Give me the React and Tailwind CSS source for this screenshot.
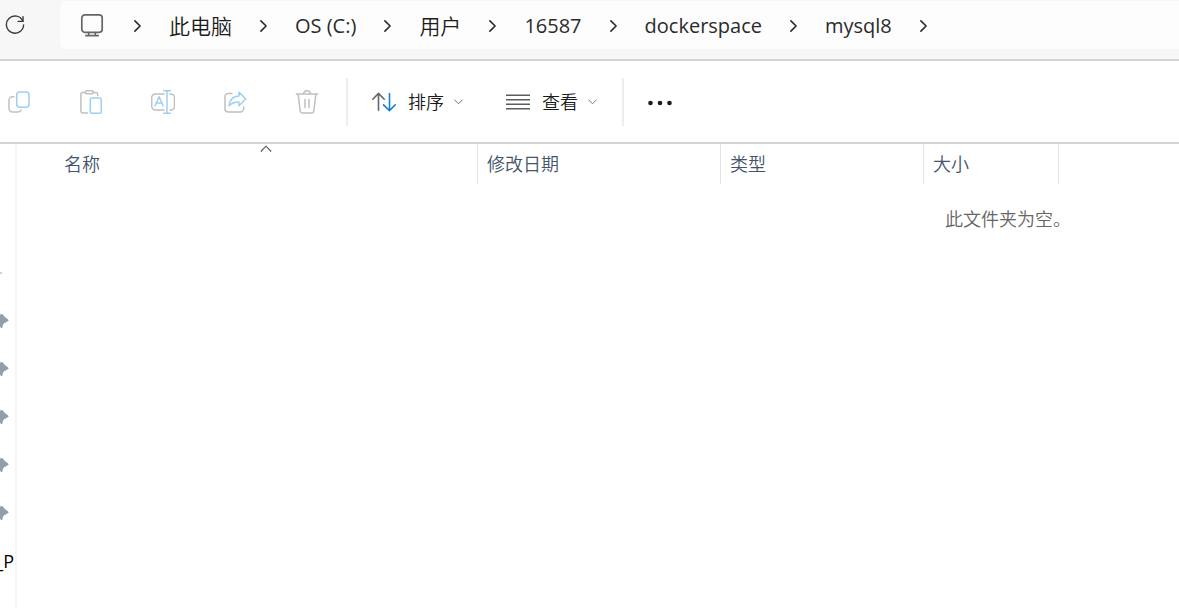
import React from 'react';

const crumbs = [
  { name: '此电脑', cjk: true },
  { name: 'OS (C:)' },
  { name: '用户', cjk: true },
  { name: '16587' },
  { name: 'dockerspace' },
  { name: 'mysql8' },
];

function CrumbChevron() {
  return (
    <svg className="h-3 w-[7px] shrink-0" viewBox="0 0 7 12" fill="none" stroke="#2b2b2b" strokeWidth="1.6" strokeLinecap="round" strokeLinejoin="round" aria-hidden="true">
      <path d="M0.9 0.9 6.1 6 0.9 11.1" />
    </svg>
  );
}

function MenuChevron() {
  return (
    <svg className="h-2 w-[9px] shrink-0" viewBox="0 0 9 8" fill="none" stroke="#777" strokeWidth="1" strokeLinecap="round" aria-hidden="true">
      <path d="M0.8 2 4.5 5.8 8.2 2" />
    </svg>
  );
}

function RefreshIcon() {
  return (
    <svg className="size-5" viewBox="0 0 20 20" fill="none" stroke="#3a3a3a" strokeWidth="1.4" strokeLinecap="round" strokeLinejoin="round" aria-hidden="true">
      <path d="M17.9 6.2A8.6 8.6 0 1 0 18.6 10" />
      <path d="M18 1.6V6.4H13.2" />
    </svg>
  );
}

function MonitorIcon() {
  return (
    <svg className="size-6" viewBox="0 0 24 24" fill="none" stroke="#666" strokeWidth="1.7" strokeLinecap="round" aria-hidden="true">
      <rect x="1.8" y="0.9" width="20.4" height="17.4" rx="3" />
      <path d="M8.7 18.5v3M15.3 18.5v3M5.8 21.6h12.4" />
    </svg>
  );
}

const GREY = '#c0c0c0';
const BLUE = '#9dcff3';

function ToolIcon({ children }) {
  return (
    <svg className="size-6" viewBox="0 0 24 24" fill="none" stroke={GREY} strokeWidth="1.5" strokeLinecap="round" strokeLinejoin="round" aria-hidden="true">
      {children}
    </svg>
  );
}

const tools = [
  {
    label: '复制',
    icon: (
      <>
        <path d="M7 6.7H5.6A3.6 3.6 0 0 0 2 10.3v8a3.7 3.7 0 0 0 3.7 3.7h5.5a3.3 3.3 0 0 0 3-2" />
        <rect x="9.7" y="1.9" width="12.3" height="15.3" rx="3" stroke={BLUE} />
      </>
    ),
  },
  {
    label: '粘贴',
    icon: (
      <>
        <path d="M6 2.5H3.5a1.6 1.6 0 0 0-1.6 1.6v17.2a1.6 1.6 0 0 0 1.6 1.6h5.2M14.3 2.5H17a1.7 1.7 0 0 1 1.7 1.7v1.3" />
        <rect x="6.3" y="0.7" width="8" height="3" rx="1.5" />
        <rect x="11.3" y="8" width="10.9" height="15.3" rx="1.6" stroke={BLUE} />
      </>
    ),
  },
  {
    label: '重命名',
    icon: (
      <>
        <path d="M13.2 4H4.4A3.7 3.7 0 0 0 0.7 7.7v8.6A3.7 3.7 0 0 0 4.4 20h8.8M19 4h.8a3.7 3.7 0 0 1 3.7 3.7v8.6a3.7 3.7 0 0 1-3.7 3.7H19" />
        <path d="M12.7 0.7h6.6M16 0.7v22.6M12.7 23.3h6.6M4 16 8.1 6.8 12.2 16M5.4 13h5.4" stroke={BLUE} />
      </>
    ),
  },
  {
    label: '共享',
    icon: (
      <>
        <path d="M9 3.4H5.2A3.2 3.2 0 0 0 2 6.6v12.1a3.2 3.2 0 0 0 3.2 3.2h12a3.4 3.4 0 0 0 3.5-3.4V17" />
        <path d="M16 2.2 22.7 9 16 15.8V12C11.8 11.8 8.7 13 6 15.8 6.6 10.2 10 6.4 16 6.1Z" stroke={BLUE} />
      </>
    ),
  },
  {
    label: '删除',
    icon: (
      <path d="M1.3 4.1h21.4M3.2 4.3l2 16.8a2 2 0 0 0 2 1.8h9.6a2 2 0 0 0 2-1.8l2-16.8M8.7 4a3.3 3.3 0 0 1 6.6 0M10 9.5v8M14 9.5v8" />
    ),
  },
];

function SortIcon() {
  return (
    <svg className="size-6" viewBox="0 0 24 24" fill="none" strokeWidth="1.6" strokeLinecap="round" strokeLinejoin="round" aria-hidden="true">
      <path d="M6.5 20.3V3.5M0.8 9.2 6.5 3.4l5.7 5.8" stroke="#666" />
      <path d="M17.5 3.5V20.5M11.5 14.8l6 5.8 5.8-5.8" stroke="#1a7fd4" />
    </svg>
  );
}

function ListIcon() {
  return (
    <svg className="size-6" viewBox="0 0 24 24" stroke="#5c5c5c" strokeWidth="1.4" aria-hidden="true">
      <path d="M0 5.2h24M0 9.8h24M0 14.2h24M0 18.8h24" />
    </svg>
  );
}

function PinIcon() {
  return (
    <svg className="h-4 w-[9px]" viewBox="0 0 9 16" fill="#939fa7" aria-hidden="true">
      <path d="M0 1.5 2.2 1 4.5 3.5 8.6 7 8.3 8 4.2 10.3 3 11.5 2.5 14.5 1.5 15.3 0 13.8Z" />
    </svg>
  );
}

const columns = [
  { label: '名称', width: 'w-[461px]', pad: 'pl-[47px]', sorted: true },
  { label: '修改日期', width: 'w-[243px]', pad: 'pl-[9px]' },
  { label: '类型', width: 'w-[203px]', pad: 'pl-[9px]' },
  { label: '大小', width: 'w-[135px]', pad: 'pl-[9px]' },
];

export default function App() {
  return (
    <div className="flex min-h-screen flex-col overflow-hidden bg-white font-['Noto_Sans','Noto_Sans_CJK_SC',sans-serif] font-[350] text-[#1b1b1b]">
      <header className="flex items-start border-b-2 border-[#d4d4d4] bg-[#f7f7f7] pt-px pb-[10px]">
        <button type="button" aria-label="刷新" className="flex h-12 w-15 shrink-0 items-center pl-[5px]">
          <RefreshIcon />
        </button>
        <nav aria-label="路径" className="flex h-12 min-w-0 flex-1 items-center gap-7 rounded-l-md bg-[#fdfdfd] pt-px pl-5">
          <a href="#" aria-label="桌面" className="mr-[2px] shrink-0">
            <MonitorIcon />
          </a>
          <CrumbChevron />
          {crumbs.map(({ name, cjk }) => (
            <React.Fragment key={name}>
              <a
                href="#"
                className={cjk ? 'shrink-0 text-[21px] leading-7 whitespace-nowrap' : "shrink-0 font-['Open_Sans','Noto_Sans',sans-serif] text-xl leading-7 font-normal whitespace-nowrap text-[#2b2b2b]"}
              >
                {name}
              </a>
              <CrumbChevron />
            </React.Fragment>
          ))}
        </nav>
      </header>

      <div role="toolbar" aria-label="命令" className="flex items-center border-b-2 border-[#d4d4d4] pt-[17px] pb-4 pl-[7px] text-lg leading-6">
        <div className="flex gap-12">
          {tools.map((tool) => (
            <button key={tool.label} type="button" aria-label={tool.label} className="size-6">
              <ToolIcon>{tool.icon}</ToolIcon>
            </button>
          ))}
        </div>
        <div className="ml-[27px] h-12 w-[2px] bg-[#ededed]" />
        <button type="button" className="ml-6 flex items-center gap-3 font-[350]">
          <SortIcon />
          <span className="flex items-center gap-[10px]">排序<MenuChevron /></span>
        </button>
        <button type="button" className="ml-[43px] flex items-center gap-3 font-[350]">
          <ListIcon />
          <span className="flex items-center gap-[10px]">查看<MenuChevron /></span>
        </button>
        <div className="ml-[25px] h-12 w-[2px] bg-[#ededed]" />
        <button type="button" aria-label="查看更多" className="ml-6 size-6">
          <svg className="size-6" viewBox="0 0 24 24" fill="#1b1b1b" aria-hidden="true">
            <circle cx="2.5" cy="13" r="2.3" />
            <circle cx="12" cy="13" r="2.3" />
            <circle cx="21.5" cy="13" r="2.3" />
          </svg>
        </button>
      </div>

      <div className="flex flex-1 pb-[2px]">
        <aside className="w-[17px] shrink-0 border-r-2 border-[#f5f5f5] pt-[105px]">
          <ul>
            <li className="flex h-12 items-center"><span className="h-[2px] w-[2px] bg-[#d0d0d0]" /></li>
            {[0, 1, 2, 3, 4].map((n) => (
              <li key={n} className="flex h-12 items-center"><PinIcon /></li>
            ))}
            <li className="flex h-12 items-center justify-end pr-px font-['Open_Sans','Noto_Sans',sans-serif] text-lg font-normal text-black">_P</li>
          </ul>
        </aside>
        <main className="min-w-0 flex-1">
          <table className="table-fixed border-separate border-spacing-0">
            <thead>
              <tr>
                {columns.map((col) => (
                  <th key={col.label} scope="col" className={`relative h-10 border-r border-[#e3e3e3] p-0 text-left text-lg leading-6 font-[350] text-[#44546a] ${col.width} ${col.pad}`}>
                    {col.label}
                    {col.sorted && (
                      <svg className="absolute top-[1px] left-[243px] h-2 w-3" viewBox="0 0 12 8" fill="none" stroke="#555" strokeWidth="1.1" aria-hidden="true">
                        <path d="M0.8 6.5 6 1.2 11.2 6.5" />
                      </svg>
                    )}
                  </th>
                ))}
              </tr>
            </thead>
          </table>
          <p className="pt-[23px] pl-[928px] text-lg leading-6 whitespace-nowrap text-[#666]">此文件夹为空。</p>
        </main>
      </div>
    </div>
  );
}
